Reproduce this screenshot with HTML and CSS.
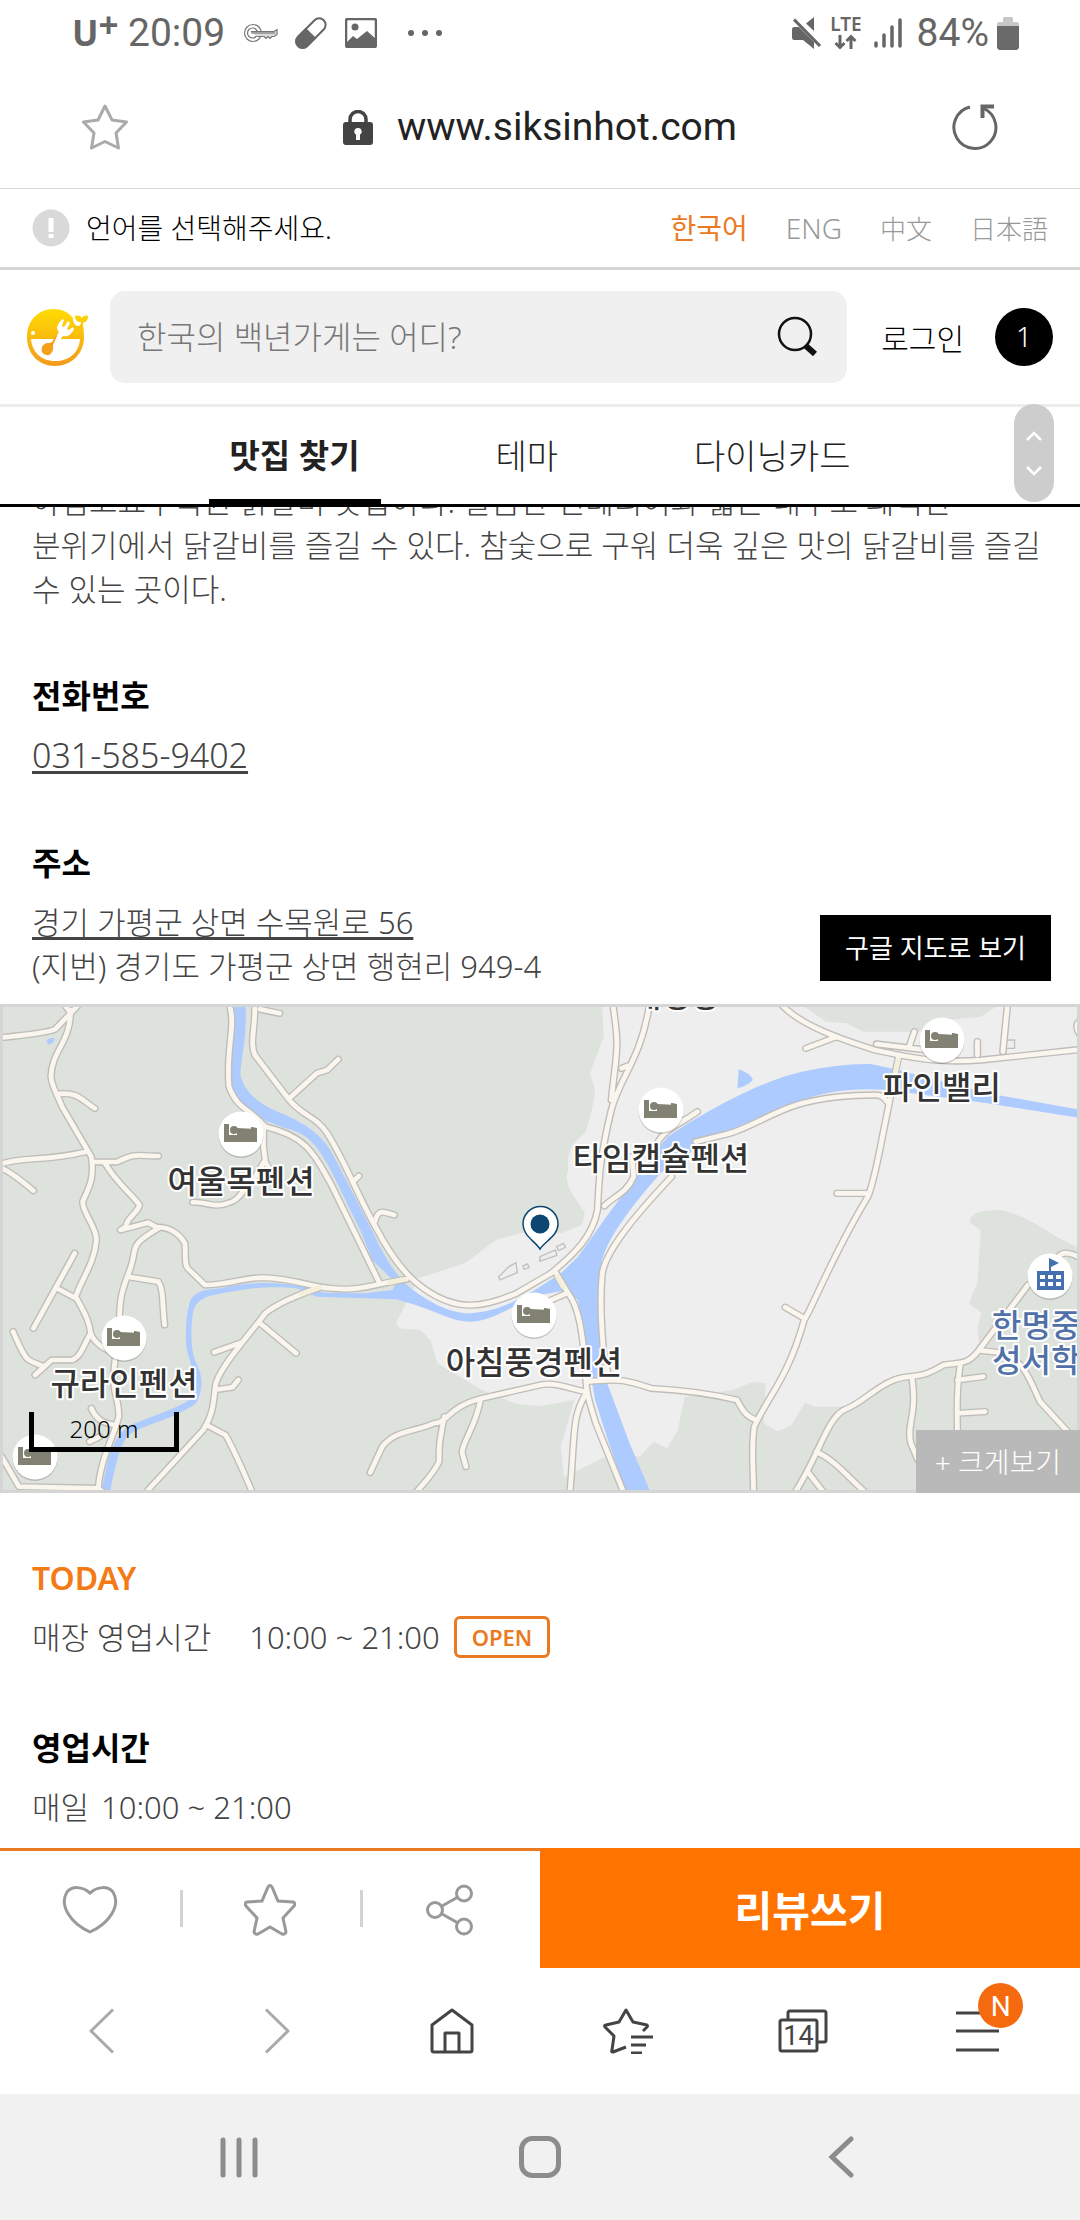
FILE: index.html
```html
<!DOCTYPE html>
<html lang="ko">
<head>
<meta charset="utf-8">
<title>식신 - 맛집 정보</title>
<meta name="viewport" content="width=device-width, initial-scale=1">
<link rel="stylesheet" href="styles.css">
</head>
<body>
<div class="status">
  <div class="status-left">
    <span class="carrier">U<sup>+</sup></span>
    <span class="clock">20:09</span>
    <svg class="key" width="36" height="20" viewBox="0 0 36 20" fill="none" stroke="#777" stroke-width="1.200"><circle cx="10" cy="10" r="8.500"/><circle cx="9.500" cy="10" r="5"/><path d="M8 8.500h23l3-2v5l-3 2h-2l-2 2-2-2-2 2-2-2h-7" fill="#ddd"/><path d="M8 10h24"/></svg>
    <svg class="pill" width="32" height="32" viewBox="0 0 32 32"><g transform="rotate(45 16 16)"><rect x="9.500" y="-2" width="13" height="36" rx="6.500" fill="none" stroke="#666" stroke-width="2"/><path d="M8.500 16h15v12a7.500 7.500 0 0 1-15 0z" fill="#666"/></g></svg>
    <svg class="photo" width="32" height="30" viewBox="0 0 32 30"><rect x="1" y="1" width="30" height="28" rx="2" fill="#fff" stroke="#666" stroke-width="2.500"/><circle cx="10" cy="9" r="3.500" fill="#666"/><path d="M2 24l6-6 4 3 10-8 9 8v8H2z" fill="#666"/></svg>
    <svg width="36" height="8" viewBox="0 0 36 8" fill="#666"><circle cx="4" cy="4" r="3"/><circle cx="18" cy="4" r="3"/><circle cx="32" cy="4" r="3"/></svg>
  </div>
  <div class="status-right">
    <svg width="30" height="32" viewBox="0 0 30 32" fill="#666"><path d="M2 10h5l15 15v7l-11-9H2q-2 0-2-3v-7q0-3 2-3zM22 0v14l-8-7.500z"/><path d="M4 1L30 27" stroke="#fff" stroke-width="2"/><path d="M2 2.500L28 29" stroke="#666" stroke-width="3.200"/></svg>
    <span class="lte">LTE<svg width="24" height="16" viewBox="0 0 24 16" fill="none" stroke="#666" stroke-width="3"><path d="M6 1v12M1.500 9L6 13.500 10.500 9M17 15V3M12.500 7L17 2.500 21.500 7"/></svg></span>
    <svg class="signal" width="28" height="30" viewBox="0 0 28 30" stroke="#666" stroke-width="3.500" stroke-linecap="round"><path d="M2 25v3M10 17v11M18 9v19M26 2v26"/></svg>
    <span class="clock">84%</span>
    <svg width="22" height="33" viewBox="0 0 22 33"><path d="M0 9V6l2-1h4V1l1-1h8l1 1v4h4l2 1v3z" fill="#c8c8c8"/><path d="M0 9h22v22l-2 2H2l-2-2z" fill="#6a6a6a"/></svg>
  </div>
</div>

<div class="urlbar">
  <button class="icon-btn" aria-label="즐겨찾기"><svg width="46" height="46" viewBox="0 0 46 46" fill="none" stroke="#aaa" stroke-width="3" stroke-linejoin="round"><path d="M23 2l7 14 14.500 2-10.500 11 2.500 15L23 37.500 9.500 44 12 29 1.500 18 16 16z"/></svg></button>
  <span class="address">
    <svg width="30" height="35" viewBox="0 0 30 35"><path d="M7 14V9.500a8 8 0 0 1 16 0V14" fill="none" stroke="#444" stroke-width="3.500"/><rect y="12" width="30" height="23" rx="3" fill="#444"/><path d="M15 18a3.500 3.500 0 0 1 2 6.500V30h-4v-5.500A3.500 3.500 0 0 1 15 18z" fill="#fff"/></svg>
    <span>www.siksinhot.com</span>
  </span>
  <button class="icon-btn" aria-label="새로고침"><svg width="46" height="46" viewBox="0 0 46 46" fill="none" stroke="#666" stroke-width="3"><path d="M18 3A21 21 0 1 0 32 4.500"/><path d="M42 2.500H30.500V14" stroke-width="4"/></svg></button>
</div>

<div class="langbar">
  <svg width="38" height="38" viewBox="0 0 38 38"><circle cx="19" cy="19" r="18.500" fill="#d9d9d9"/><path d="M16.500 9h5v14h-5zM16.500 25h5v4h-5z" fill="#fff"/></svg>
  <span>언어를 선택해주세요.</span>
  <nav class="langs"><a class="on" href="#ko">한국어</a><a href="#en">ENG</a><a class="han" href="#zh">中文</a><a class="han" href="#ja">日本語</a></nav>
</div>

<header class="header">
  <a href="#home" aria-label="홈"><svg class="logo" width="62" height="62" viewBox="0 0 62 62"><defs><linearGradient id="sun" x2="0" y2="1"><stop offset="0" stop-color="#ffdc00"/><stop offset="1" stop-color="#f39a1e"/></linearGradient></defs><path d="M29 60C13 60 1 48 1 31S13 3 27 3c9 0 15 3 20 9 0 5 2 8 5 8 2 0 3-2 3-4-4 0-6-2-6-6 3-1 6 0 7 2 1-2 3-3 6-2 0 4-2 6-5 7 0 4 1 8 1 14 0 17-13 29-29 29z" fill="url(#sun)"/><path d="M5 33h49c-1 14-11 22-25 22S6 46 5 33z" fill="#fff"/><circle cx="7" cy="27" r="2" fill="#fff"/><path d="M29 33l4-7c-3-3-2-6 0-9l3-4 2 1-2 6 2 1 4-6 2 2-3 6 2 1 4-3 1 2c-3 6-6 8-11 7l-4 5z" fill="#fff"/><path d="M31 30l-4 9c1 6-2 11-7 10-7-2-5-11 1-12 2 0 3 0 5-1l4-7z" fill="#f4a01b"/></svg></a>
  <form class="search">
    <input type="search" placeholder="한국의 백년가게는 어디?" aria-label="검색어">
    <button type="button" aria-label="검색"><svg width="42" height="42" viewBox="0 0 42 42" fill="none" stroke="#111"><circle cx="18" cy="18" r="16" stroke-width="2.500"/><path d="M29 30l9 8" stroke-width="6"/></svg></button>
  </form>
  <a class="login" href="#login">로그인</a>
  <span class="count">1</span>
</header>

<nav class="tabs">
  <a class="tab active" href="#find">맛집 찾기</a>
  <a class="tab" href="#theme">테마</a>
  <a class="tab" href="#card">다이닝카드</a>
  <span class="scroller"><svg width="40" height="98" viewBox="0 0 40 98"><rect width="40" height="98" rx="20" fill="#cdcdcd"/><path d="M13 36l7-7 7 7M13 63l7 7 7-7" fill="none" stroke="#fff" stroke-width="2.500"/></svg></span>
</nav>

<main class="content">
  <p class="desc">아침고요수목원 닭갈비 맛집이다. 깔끔한 인테리어와 넓은 내부로 쾌적한<br>분위기에서 닭갈비를 즐길 수 있다. 참숯으로 구워 더욱 깊은 맛의 닭갈비를 즐길<br>수 있는 곳이다.</p>
  <section class="block">
    <h2>전화번호</h2>
    <p><a class="phone" href="tel:031-585-9402">031-585-9402</a></p>
  </section>
  <section class="block place">
    <h2>주소</h2>
    <div class="place-row">
      <p><a href="#addr">경기 가평군 상면 수목원로 56</a><br>(지번) 경기도 가평군 상면 행현리 949-4</p>
      <button class="google">구글 지도로 보기</button>
    </div>
  </section>
  <div class="map">
    <svg class="map-svg" viewBox="3 7 1074 483" preserveAspectRatio="xMidYMid slice">
      <defs>
        <g id="bed"><circle r="22.500" cy="1.500" fill="#000" opacity=".18"/><circle r="22.500" fill="#fff"/><path d="M-17-10h5V1h22V-7h1l5 1V8h-33z" fill="#828274"/><path d="M-4-6L16-5V3H-4z" fill="#828274"/><circle cx="-7" cy="-4" r="4" fill="#828274"/></g>
        <g id="roads">
          <path d="M10 112C70 105 130 100 160 88L225 18M190 18l15 20"/>
          <path d="M205 30C205 130 150 150 148 230C150 260 170 290 180 320L265 470C275 530 260 560 240 605C240 640 280 680 280 720C275 790 235 840 220 890C240 930 260 960 263 1000C275 1030 300 1045 330 1060"/>
          <path d="M165 282C230 275 235 300 275 325M10 490C70 470 130 485 250 455M270 486H340C400 455 400 470 460 468M5 505C30 515 60 540 97 572M305 490C340 550 380 580 405 615C400 640 370 650 365 680L350 690L430 668L460 685C370 740 400 740 380 800C360 860 345 880 347 980C340 1050 330 1080 330 1140C330 1180 345 1200 345 1250C330 1310 290 1380 285 1470"/>
          <path d="M455 682C490 680 520 700 537 730C540 780 535 790 545 805L595 855C660 855 700 835 760 833C850 835 900 860 960 865C1050 875 1090 850 1180 838"/>
          <path d="M370 830L460 845C475 870 470 900 478 975M217 760L97 985M165 865L220 895M263 1000C240 1040 235 1070 210 1080H150L102 1125M38 995C75 1080 70 1080 130 1100"/>
          <path d="M667 18C685 80 655 150 665 260C690 330 720 320 770 380C900 410 920 480 960 550L1100 845M765 380V440L770 480L735 540C700 570 700 600 660 610C620 625 600 605 560 607M770 485L800 540"/>
          <path d="M740 25C740 90 725 130 740 165L840 300C880 350 920 350 950 400C1000 480 1040 590 1090 680C1130 760 1180 830 1230 865C1330 940 1410 920 1500 880L1600 820"/>
          <path d="M755 28L812 40M840 295L920 220L950 210L982 178M1030 540L1042 528M1088 665C1100 625 1110 635 1145 645"/>
          <path d="M930 862C850 890 800 915 770 940C720 1010 630 1110 625 1160C620 1220 615 1250 590 1290L430 1470M755 970L860 1060M700 1028L622 1057M635 1168L675 1162L692 1140M600 1275L655 1305C680 1350 700 1400 730 1470"/>
          <path d="M265 1225C280 1260 300 1270 335 1275M260 1325L290 1310M5 1370L55 1460L285 1465L310 1485"/>
          <path d="M1702 1175C1660 1170 1620 1145 1568 1155L1400 1195C1300 1220 1300 1270 1260 1270C1190 1300 1150 1290 1110 1340L1075 1418M1290 1250C1275 1330 1275 1330 1275 1385C1260 1420 1230 1450 1210 1475M1395 1200C1380 1290 1330 1340 1345 1370L1353 1400"/>
          <path d="M1780 18C1800 150 1790 150 1775 300M1885 18C1860 180 1800 230 1775 330C1740 480 1740 530 1735 630C1720 710 1670 760 1600 820"/>
          <path d="M1805 205L1820 198M2025 335C1980 370 1920 390 1905 440M1835 470L1840 530C1820 580 1780 590 1755 618M1950 530C1850 640 1750 760 1748 830C1740 920 1750 1020 1752 1050L1765 1120"/>
          <path d="M2020 425L2100 405C2160 395 2250 330 2330 310C2400 290 2480 285 2545 285C2565 285 2570 300 2580 310"/>
          <path d="M2270 15C2330 80 2450 120 2540 150C2650 175 2730 190 2850 180L3140 148M2340 145L2430 110M2545 132L2690 150M2640 140L2655 95M2838 125V165M2925 18L2912 155M3140 60C3120 70 3125 90 3140 110"/>
          <path d="M2610 165L2570 370C2550 470 2540 540 2520 590C2420 760 2360 920 2335 960C2290 1130 2230 1190 2190 1280C2180 1350 2188 1400 2188 1475M2430 580H2515M2280 922L2335 955"/>
          <path d="M1615 820L1650 880C1680 920 1690 990 1700 1100C1700 1180 1710 1200 1730 1270L1810 1475M1590 905L1645 880M1705 1145C1800 1135 1820 1140 1890 1165C1980 1170 2080 1185 2140 1200C2160 1240 2170 1250 2195 1260M1702 1180C1660 1250 1670 1300 1655 1475"/>
          <path d="M2985 855L2850 1040C2810 1100 2790 1085 2740 1095C2690 1125 2680 1125 2640 1130C2560 1135 2510 1210 2450 1230C2400 1260 2380 1360 2310 1475M2648 1135C2665 1240 2630 1280 2645 1330L2665 1380M2370 1355C2430 1385 2450 1420 2510 1475M2345 1415L2390 1475M2850 1052L2925 1060C2980 1100 2990 1140 3020 1205L3100 1295M2788 1095C2775 1180 2780 1240 2780 1300M2780 1140L2855 1130M2780 1240L2860 1235M3040 840C3070 790 3060 730 3140 775"/>
        </g>
      </defs>
      <rect width="1080" height="500" fill="#dde2dc"/>
      <g transform="scale(.3444 .3333)">
        <path fill="#eee" d="M1748 15L1753 110L1713 220L1728 270Q1718 350 1698 400Q1640 440 1650 510Q1640 530 1655 570L1698 640L1690 675L1628 700Q1570 690 1510 700L1440 720L1350 790L1215 835L1150 970L1160 985L1220 990L1250 1020L1270 1090L1400 1170L1500 1212L1568 1218L1668 1200L1628 1340L1638 1432L1768 1365L1858 1370L1898 1325L1938 1345L1968 1290L1988 1190L2128 1170L2188 1145L2223 1150L2218 1270L2258 1295L2298 1275L2338 1208L2368 1220L2458 1220L2568 1140L2808 1080L2843 1030L2838 980L2850 940L2813 910L2838 850L2848 690L2818 670Q2810 630 2898 630Q2960 635 3068 710L3140 748V15z"/>
        <path fill="#dde2dc" d="M2328 15L2398 65L2458 70L2508 95H2668L2748 60L2848 50L2900 15z"/>
        <path fill="#adcbff" d="M680 15H712C720 100 698 180 698 225C710 280 760 320 830 345C900 380 940 410 970 470L1080 690C1110 760 1130 790 1165 840C1230 900 1300 940 1365 940C1440 935 1500 905 1568 860L1628 820L1678 770L1768 640L1848 530L1938 410L1998 370Q2200 245 2328 215Q2440 190 2528 192L2608 210L2868 280L3140 330V355L2868 310L2618 275Q2440 250 2308 310L2168 370L2048 425L1918 520C1850 600 1770 700 1748 780C1725 860 1740 1020 1763 1150L1828 1330L1888 1475H1818L1768 1330L1728 1200L1698 1020L1678 900L1648 870L1568 885L1490 920C1430 955 1390 965 1365 965C1310 965 1260 930 1190 910L1150 898L920 890L860 865C760 855 700 870 620 885C580 895 565 910 560 940C550 1020 560 1070 570 1090Q600 1150 570 1210C500 1260 430 1270 380 1300C350 1320 335 1400 320 1475H295C310 1400 315 1330 370 1280C430 1250 500 1235 565 1190C580 1150 540 1060 540 1030C540 980 540 950 548 920C555 880 580 870 640 865C700 850 770 840 900 862L940 878L1060 880L1140 870L1150 850L1080 780L1050 700L970 530C930 450 900 400 830 385L750 355C680 310 670 270 670 240z"/>
        <path fill="#adcbff" d="M2145 208Q2180 220 2186 240Q2170 258 2141 265zM135 122Q145 110 160 116Q155 132 140 133z"/>
        <g fill="none" stroke="#c2c0bd" stroke-width="4"><path d="M1448 830l30-30 20-12 4 30-50 22zM1518 798l14-6 4 10-14 6zM1568 770l45-20 4 16-50 18zM1616 740l20-10 6 12-20 10zM2922 120h24v25h-24z"/></g>
        <g fill="none" stroke-linecap="round" stroke-linejoin="round"><use href="#roads" stroke="#bfbdba" stroke-width="22"/><use href="#roads" stroke="#faf6ee" stroke-width="14"/><path d="M875 882L930 862M1130 848L1175 838M1618 830L1635 860M2608 180L2585 290" stroke="#f3efda" stroke-width="14"/></g>
      </g>
      <use href="#bed" x="241" y="134"/><use href="#bed" x="124" y="338"/><use href="#bed" x="35" y="457"/><use href="#bed" x="661" y="110"/><use href="#bed" x="942" y="40"/><use href="#bed" x="534" y="315"/>
      <circle cx="1050" cy="277.500" r="22.500" opacity=".18"/><circle cx="1050" cy="276" r="22.500" fill="#fff"/><path d="M1037 271h27v19h-27zM1049 271v-13l10 5-8 4v4z" fill="#4570b0"/><path d="M1040 275h5v4h-5zM1048 275h5v4h-5zM1056 275h5v4h-5zM1040 282h5v4h-5zM1048 282h5v4h-5zM1056 282h5v4h-5z" fill="#fff"/>
      <path d="M540 249C535 241 523 236 523 224a17.500 17.500 0 0 1 35 0c0 12-13 17-18 25z" fill="#fff" stroke="#0d4670" stroke-width="1.500"/><circle cx="540" cy="224" r="9.500" fill="#0d4670"/>
      <g class="map-label" text-anchor="middle"><text x="676" y="7">재경장</text><text x="241" y="193">여울목펜션</text><text x="124" y="395">규라인펜션</text><text x="661" y="170">타임캡슐펜션</text><text x="942" y="99">파인밸리</text><text x="534" y="374">아침풍경펜션</text></g>
      <g class="map-label school"><text x="992" y="337">한명중</text><text x="992" y="372">성서학교</text></g>
    </svg>
    <span class="scale">200 m</span>
    <button class="enlarge">+ 크게보기</button>
  </div>
  <section class="block today">
    <h2 class="accent">TODAY</h2>
    <p class="hours"><span>매장 영업시간</span><span>10:00 ~ 21:00</span><span class="open">OPEN</span></p>
  </section>
  <section class="block week">
    <h2>영업시간</h2>
    <p class="daily"><span>매일</span><span>10:00 ~ 21:00</span></p>
  </section>
</main>

<div class="actions">
  <div class="quick">
    <button aria-label="좋아요"><svg width="56" height="50" viewBox="0 0 56 50"><path d="M28 8C20 1 10 1 5 7C-3 20 8 38 28 47C48 38 59 20 51 7C46 1 36 1 28 8z"/></svg></button>
    <button aria-label="즐겨찾기"><svg width="52" height="52" viewBox="0 0 52 52"><path d="M24 3q2-3 4 0l6 14 15 1q3 1 1 4L39 34l3 14q-1 3-4 2l-12-7-12 7q-3 1-4-2l3-14L2 22q-2-3 1-4l15-1z"/></svg></button>
    <button aria-label="공유"><svg width="48" height="52" viewBox="0 0 48 52"><circle cx="9" cy="26" r="7.500"/><circle cx="38" cy="9.500" r="7.500"/><circle cx="38" cy="42.500" r="7.500"/><path d="M16 22l16-9M16 30l16 9"/></svg></button>
  </div>
  <button class="review">리뷰쓰기</button>
</div>

<nav class="toolbar">
  <button aria-label="뒤로"><svg width="46" height="46" viewBox="0 0 46 46"><path d="M34 1.500L12 23l22 21.500"/></svg></button>
  <button aria-label="앞으로"><svg width="46" height="46" viewBox="0 0 46 46"><path d="M12 1.500L34 23 12 44.500"/></svg></button>
  <button aria-label="홈"><svg width="46" height="46" viewBox="0 0 46 46"><path d="M3 42V17L23 2l20 15v25q0 2-2 2H5q-2 0-2-2zM16 44V25h14v19"/></svg></button>
  <button aria-label="북마크"><svg width="50" height="46" viewBox="0 0 50 46"><path d="M23 39L10 44q-2 0-1-2l2-14L2 19q-1-2 1-2l13-3 7-12 7 12 14 3q1 1 0 2l-4 4M28 29h22M28 37h15M28 45h11"/></svg></button>
  <button aria-label="탭"><svg width="50" height="46" viewBox="0 0 50 46"><rect x="2" y="12" width="37" height="31" rx="2"/><path d="M10 11V5q0-2 2-2h34q2 0 2 2v27q0 2-2 2h-6"/><text class="tabcount" x="20.500" y="37" text-anchor="middle">14</text></svg></button>
  <button class="more" aria-label="메뉴"><svg width="44" height="46" viewBox="0 0 44 46"><path d="M0 5h43M0 23h43M0 42h43"/></svg><span class="badge">N</span></button>
</nav>

<nav class="system">
  <button aria-label="최근 앱"><svg width="42" height="42" viewBox="0 0 42 42"><path d="M5 4v35M21 4v35M37 4v35"/></svg></button>
  <button aria-label="홈 화면"><svg width="44" height="44" viewBox="0 0 44 44"><rect x="3.500" y="3.500" width="37" height="37" rx="11"/></svg></button>
  <button aria-label="이전"><svg width="42" height="42" viewBox="0 0 42 42"><path d="M31 3L12 21l19 18"/></svg></button>
</nav>
</body>
</html>
```

FILE: styles.css
```css
* { box-sizing: border-box; }
body {
  margin: 0;
  min-height: 100vh;
  display: flex;
  flex-direction: column;
  background: #fff;
  color: #444;
  font-family: "Noto Sans", "Noto Sans CJK KR", sans-serif;
  font-size: 31px;
  font-weight: 300;
  line-height: 44px;
}
h2, p { margin: 0; }
a { color: inherit; text-decoration: none; }
button { border: 0; padding: 0; background: none; color: inherit; font: inherit; display: flex; align-items: center; justify-content: center; }
svg { display: block; flex: none; }

.status { display: flex; justify-content: space-between; align-items: center; height: 66px; padding: 0 61px 0 72px; color: #666; font-family: Roboto, sans-serif; font-weight: 400; }
.status-left, .status-right { display: flex; align-items: center; }
.carrier { font-family: "Noto Sans", sans-serif; font-size: 35px; font-weight: 700; width: 56px; white-space: nowrap; }
.carrier sup { font-size: 35px; line-height: 0; vertical-align: 8px; }
.clock { font-size: 39px; }
.key { margin: 0 16px 0 18px; }
.photo { margin: 0 30px 0 18px; }
.lte { display: flex; flex-direction: column; align-items: center; gap: 2px; margin: 0 12px 0 8px; font: 600 19px/16px "Noto Sans", sans-serif; }
.signal { margin-right: 15px; }
.status-right .clock { margin-right: 8px; }

.urlbar { display: flex; justify-content: space-between; align-items: center; height: 123px; padding: 0 82px; border-bottom: 1px solid #d8d8d8; }
.address { display: flex; align-items: center; gap: 24px; color: #222; font-family: Roboto, sans-serif; font-size: 39px; font-weight: 400; }

.langbar { display: flex; align-items: center; gap: 16px; height: 81px; padding: 0 32px; border-bottom: 3px solid #d5d5d5; color: #000; font-size: 28px; }
.langs { display: flex; gap: 38px; margin-left: auto; color: #999; }
.langs .on { color: #ea7a22; font-weight: 400; }
.han { font-family: "Noto Sans CJK JP", sans-serif; font-size: 26px; }

.header { display: flex; align-items: center; height: 137px; padding: 0 27px 0 26px; border-bottom: 3px solid #ececec; color: #000; }
.search { flex: 1; display: flex; align-items: center; height: 92px; margin: 0 34px 0 22px; padding: 0 28px 0 27px; border-radius: 15px; background: #f0f0f0; }
.search input { flex: 1; min-width: 0; border: 0; padding: 0; background: none; font: inherit; font-size: 32px; outline: 0; }
.search input::placeholder { color: #777; opacity: 1; }
.login { padding-top: 4px; font-size: 30px; margin-right: 31px; }
.count { width: 58px; height: 58px; border-radius: 50%; background: #000; color: #fff; font-size: 28px; line-height: 56px; text-align: center; }

.tabs { position: relative; display: flex; justify-content: center; gap: 94px; height: 100px; border-bottom: 3px solid #000; color: #222; font-size: 34px; line-height: 98px; }
.tab { padding: 0 21px; }
.tab.active { font-size: 33px; font-weight: 700; box-shadow: inset 0 -5px #000; }
.scroller { position: absolute; right: 26px; top: -3px; }

.content { flex: 1; overflow: hidden; }
.desc { margin: -28px 32px 0; white-space: nowrap; }
.block { margin-top: 63px; padding: 0 32px; }
.week { margin-top: 67px; }
h2 { color: #000; font-size: 32px; font-weight: 700; line-height: 44px; margin-bottom: 15px; }
.phone { font-size: 34px; }
.phone, .place-row a { text-decoration: underline; text-decoration-thickness: 3px; text-underline-offset: 3px; text-decoration-skip-ink: none; }
.place-row { display: flex; justify-content: space-between; align-items: flex-end; padding-bottom: 16px; }
.google { height: 66px; padding: 0 25px; margin: 0 -3px 7px 0; background: #000; color: #fff; font-size: 26px; font-weight: 400; }
.map { position: relative; height: 489px; border: 3px solid #d5d5d5; }
.map-svg { width: 100%; height: 100%; }
.map-label { font-size: 32px; font-weight: 500; fill: #333; stroke: #fff; stroke-width: 4px; paint-order: stroke; stroke-linejoin: round; }
.school { fill: #5171a8; }
.scale { position: absolute; left: 26px; bottom: 38px; width: 150px; height: 40px; border: 5px solid #000; border-top: 0; color: #000; font-size: 24px; line-height: 34px; text-align: center; }
.enlarge { position: absolute; right: -3px; bottom: -3px; height: 63px; padding: 0 19px; background: #b9b9b9; color: #fff; font-size: 28px; }
.accent { color: #f47a15; font-weight: 600; }
.hours { display: flex; align-items: center; }
.hours span:first-child { margin-right: 38px; }
.open { height: 42px; margin-left: 14px; padding: 0 15px; border: 3px solid #ea7a22; border-radius: 6px; color: #ea7a22; font-size: 22px; font-weight: 600; line-height: 36px; }
.daily { display: flex; gap: 12px; padding-bottom: 18px; }

.actions { display: grid; grid-template-columns: 1fr 1fr; height: 120px; }
.quick { display: grid; grid-template-columns: repeat(3, 1fr); border-top: 3px solid #ea7a22; fill: none; stroke: #999; stroke-width: 3; }
.quick button { position: relative; }
.quick button + button::before { content: ""; position: absolute; left: 0; top: 39px; width: 3px; height: 37px; background: #d3d3d3; }
.review { padding-top: 3px; background: #ff7400; color: #fff; font-size: 41px; font-weight: 700; }

.toolbar { display: grid; grid-template-columns: repeat(6, 1fr); height: 126px; padding: 0 14px; }
.toolbar svg { fill: none; stroke: #444; stroke-width: 3; stroke-linejoin: round; }
.toolbar button:nth-child(-n+2) svg { stroke: #aaa; }
.toolbar .tabcount { fill: #444; stroke: none; font: 400 27px Roboto, sans-serif; }
.more { position: relative; }
.badge { position: absolute; left: 50%; top: 15px; width: 45px; height: 45px; border-radius: 50%; background: #f56a0f; color: #fff; font: 400 28px/47px Roboto, sans-serif; text-align: center; }
.system { display: grid; grid-template-columns: repeat(3, 1fr); height: 126px; padding: 0 88px; background: #f1f1f1; }
.system svg { fill: none; stroke: #8c8c8c; stroke-width: 5; stroke-linecap: round; }
```
